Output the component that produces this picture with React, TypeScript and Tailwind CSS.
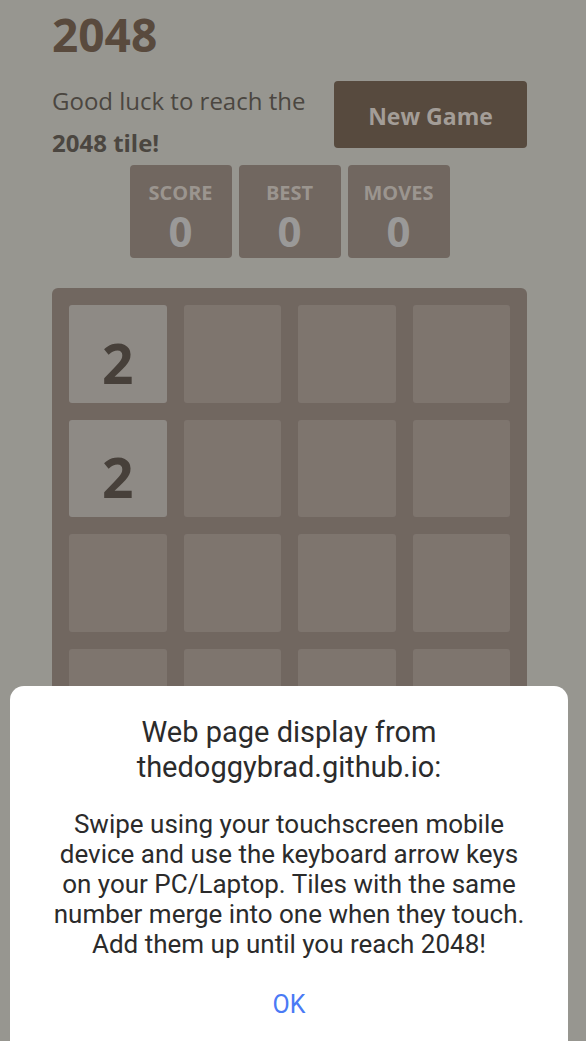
const tiles = [2, 0, 0, 0, 2, 0, 0, 0, 0, 0, 0, 0, 0, 0, 0, 0];

function StatBox({ label, value }: { label: string; value: number }) {
  return (
    <div className="flex h-[93px] w-[102px] flex-col items-center rounded-[4px] bg-[#716760] pt-[16px]">
      <span className="text-[20px] font-bold leading-[24px] text-[#9b958f]">{label}</span>
      <span className="text-[42px] font-bold leading-[52px] text-[#9a9998]">{value}</span>
    </div>
  );
}

export default function App() {
  return (
    <div
      className="relative h-[1041px] w-[586px] overflow-hidden bg-[#979690]"
      style={{ fontFamily: '"Open Sans", "Noto Sans", sans-serif' }}
    >
      <div className="ml-[52px] w-[475px] pt-[8px]">
        <h1 className="text-[46px] font-bold leading-[52px] text-[#594a3d]">2048</h1>

        <div className="mt-[20px] flex items-start justify-between">
          <p className="w-[275px] text-[24px] leading-[42px] text-[#4b4640]">
            Good luck to reach the <b className="font-bold">2048 tile!</b>
          </p>
          <button className="mt-[1px] h-[67px] w-[193px] rounded-[4px] bg-[#574a3e] pt-[3px] text-[23px] font-bold text-[#a39d97]">
            New Game
          </button>
        </div>

        <div className="mt-[1px] flex justify-center gap-[7px]">
          <StatBox label="SCORE" value={0} />
          <StatBox label="BEST" value={0} />
          <StatBox label="MOVES" value={0} />
        </div>

        <div className="mt-[30px] grid h-[475px] w-[475px] grid-cols-4 grid-rows-4 gap-[17px] rounded-[6px] bg-[#716760] p-[17px]">
          {tiles.map((v, i) => (
            <div
              key={i}
              className={
                v
                  ? 'flex items-center justify-center rounded-[3px] bg-[#8e8a85] pt-[18px] text-[55px] font-bold text-[#47403a]'
                  : 'rounded-[3px] bg-[#7e756e]'
              }
            >
              {v ? v : null}
            </div>
          ))}
        </div>
      </div>

      {/* browser alert dialog */}
      <div
        className="absolute left-[10px] top-[686px] h-[380px] w-[558px] rounded-t-[14px] bg-white pt-[29px] text-center text-[#2b2b2b]"
        style={{ fontFamily: 'Roboto, "Liberation Sans", sans-serif' }}
      >
        <h2 className="text-[29px] leading-[35px]">
          Web page display from
          <br />
          thedoggybrad.github.io:
        </h2>
        <p className="mx-auto mt-[24px] w-[490px] text-[26px] leading-[30px]">
          Swipe using your touchscreen mobile device and use the keyboard arrow keys on your PC/Laptop. Tiles with the same number merge into one when they touch. Add them up until you reach 2048!
        </p>
        <div className="mt-[31px] text-[25px] leading-[30px] text-[#4a7af5]">OK</div>
      </div>
    </div>
  );
}
